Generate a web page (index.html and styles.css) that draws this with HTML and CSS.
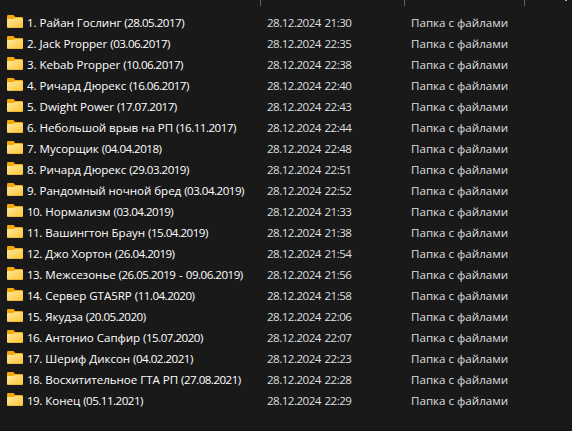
FILE: index.html
```html
<!DOCTYPE html>
<html lang="ru">
  <head>
    <meta charset="UTF-8" />
    <meta name="viewport" content="width=device-width, initial-scale=1.0" />
    <title>Папки</title>
    <link rel="stylesheet" href="styles.css">
  </head>
  <body>
    <svg class="defs" width="0" height="0">
      <defs>
        <linearGradient id="front" x1="0" y1="0" x2="1" y2="1">
          <stop offset="0" stop-color="#ffe8a0" />
          <stop offset="1" stop-color="#fdc534" />
        </linearGradient>
        <symbol id="folder" viewBox="0 0 16 13">
          <path d="M0 1.2Q0 0 1.2 0H6Q6.6 0 7 .5L8.2 2H14.8Q16 2 16 3.2V7H0Z" fill="#f3a908" />
          <path d="M0 5Q0 4 1 4H6.4Q7 4 7.4 3.6L8 3H15Q16 3 16 4V11.8Q16 13 14.8 13H1.2Q0 13 0 11.8Z" fill="url(#front)" />
          <path d="M.4 12.2Q.7 12.7 1.3 12.7H14.7Q15.3 12.7 15.6 12.2" fill="none" stroke="#e3a526" stroke-width=".6" />
        </symbol>
      </defs>
    </svg>
    <div class="explorer">
      <div class="header"><span></span><span></span><span></span><span></span></div>
      <ul class="files">
        <li><svg class="icon"><use href="#folder" /></svg><span class="name">1. Райан Гослинг <span class="num">(28.05.2017)</span></span><span class="date">28.12.2024 21:30</span><span class="type">Папка с файлами</span></li>
        <li><svg class="icon"><use href="#folder" /></svg><span class="name">2. Jack Propper <span class="num">(03.06.2017)</span></span><span class="date">28.12.2024 22:35</span><span class="type">Папка с файлами</span></li>
        <li><svg class="icon"><use href="#folder" /></svg><span class="name">3. Kebab Propper <span class="num">(10.06.2017)</span></span><span class="date">28.12.2024 22:38</span><span class="type">Папка с файлами</span></li>
        <li><svg class="icon"><use href="#folder" /></svg><span class="name">4. Ричард Дюрекс <span class="num">(16.06.2017)</span></span><span class="date">28.12.2024 22:40</span><span class="type">Папка с файлами</span></li>
        <li><svg class="icon"><use href="#folder" /></svg><span class="name">5. Dwight Power <span class="num">(17.07.2017)</span></span><span class="date">28.12.2024 22:43</span><span class="type">Папка с файлами</span></li>
        <li><svg class="icon"><use href="#folder" /></svg><span class="name">6. Небольшой врыв на РП <span class="num">(16.11.2017)</span></span><span class="date">28.12.2024 22:44</span><span class="type">Папка с файлами</span></li>
        <li><svg class="icon"><use href="#folder" /></svg><span class="name">7. Мусорщик <span class="num">(04.04.2018)</span></span><span class="date">28.12.2024 22:48</span><span class="type">Папка с файлами</span></li>
        <li><svg class="icon"><use href="#folder" /></svg><span class="name">8. Ричард Дюрекс <span class="num">(29.03.2019)</span></span><span class="date">28.12.2024 22:51</span><span class="type">Папка с файлами</span></li>
        <li><svg class="icon"><use href="#folder" /></svg><span class="name">9. Рандомный ночной бред <span class="num">(03.04.2019)</span></span><span class="date">28.12.2024 22:52</span><span class="type">Папка с файлами</span></li>
        <li><svg class="icon"><use href="#folder" /></svg><span class="name"><span class="num">10. </span>Нормализм <span class="num">(03.04.2019)</span></span><span class="date">28.12.2024 21:33</span><span class="type">Папка с файлами</span></li>
        <li><svg class="icon"><use href="#folder" /></svg><span class="name"><span class="num">11. </span>Вашингтон Браун <span class="num">(15.04.2019)</span></span><span class="date">28.12.2024 21:38</span><span class="type">Папка с файлами</span></li>
        <li><svg class="icon"><use href="#folder" /></svg><span class="name"><span class="num">12. </span>Джо Хортон <span class="num">(26.04.2019)</span></span><span class="date">28.12.2024 21:54</span><span class="type">Папка с файлами</span></li>
        <li><svg class="icon"><use href="#folder" /></svg><span class="name"><span class="num">13. </span>Межсезонье <span class="num">(26.05.2019 - 09.06.2019)</span></span><span class="date">28.12.2024 21:56</span><span class="type">Папка с файлами</span></li>
        <li><svg class="icon"><use href="#folder" /></svg><span class="name"><span class="num">14. </span>Сервер GTA5RP <span class="num">(11.04.2020)</span></span><span class="date">28.12.2024 21:58</span><span class="type">Папка с файлами</span></li>
        <li><svg class="icon"><use href="#folder" /></svg><span class="name"><span class="num">15. </span>Якудза <span class="num">(20.05.2020)</span></span><span class="date">28.12.2024 22:06</span><span class="type">Папка с файлами</span></li>
        <li><svg class="icon"><use href="#folder" /></svg><span class="name"><span class="num">16. </span>Антонио Сапфир <span class="num">(15.07.2020)</span></span><span class="date">28.12.2024 22:07</span><span class="type">Папка с файлами</span></li>
        <li><svg class="icon"><use href="#folder" /></svg><span class="name"><span class="num">17. </span>Шериф Диксон <span class="num">(04.02.2021)</span></span><span class="date">28.12.2024 22:23</span><span class="type">Папка с файлами</span></li>
        <li><svg class="icon"><use href="#folder" /></svg><span class="name"><span class="num">18. </span>Восхитительное ГТА РП <span class="num">(27.08.2021)</span></span><span class="date">28.12.2024 22:28</span><span class="type">Папка с файлами</span></li>
        <li><svg class="icon"><use href="#folder" /></svg><span class="name"><span class="num">19. </span>Конец <span class="num">(05.11.2021)</span></span><span class="date">28.12.2024 22:29</span><span class="type">Папка с файлами</span></li>
      </ul>
    </div>
  </body>
</html>
```
FILE: styles.css
```css
body {
  margin: 0;
  background: #191919;
  color: #fff;
  font-family: "Open Sans", "Noto Sans", sans-serif;
  font-size: 11.6px;
  overflow: hidden;
}
.defs {
  display: block;
}
.explorer {
  height: 431px;
  box-sizing: border-box;
  border-bottom: 1px solid #111;
}
/* column separators */
.header {
  display: grid;
  grid-template-columns: 261px 144px 120px 1fr;
  height: 6px;
}
.header span {
  border-right: 1px solid #636363;
}
.header span:last-child {
  width: 40px;
  height: 1px;
  border-right: 2px solid #a9b6c4;
}
.files {
  list-style: none;
  margin: 0;
  padding: 6px 0 0 7px;
}
.files li {
  display: grid;
  grid-template-columns: 20px 240px 144px 1fr;
  align-items: center;
  height: 21px;
  line-height: 21px;
  white-space: nowrap;
}
.icon {
  display: block;
  width: 16px;
  height: 13px;
  margin-bottom: 2px;
}
.name {
  letter-spacing: -0.05px;
}
.num,
.date {
  letter-spacing: -0.52px;
  word-spacing: 1.1px;
}
.date,
.type {
  color: #dedede;
}
```
